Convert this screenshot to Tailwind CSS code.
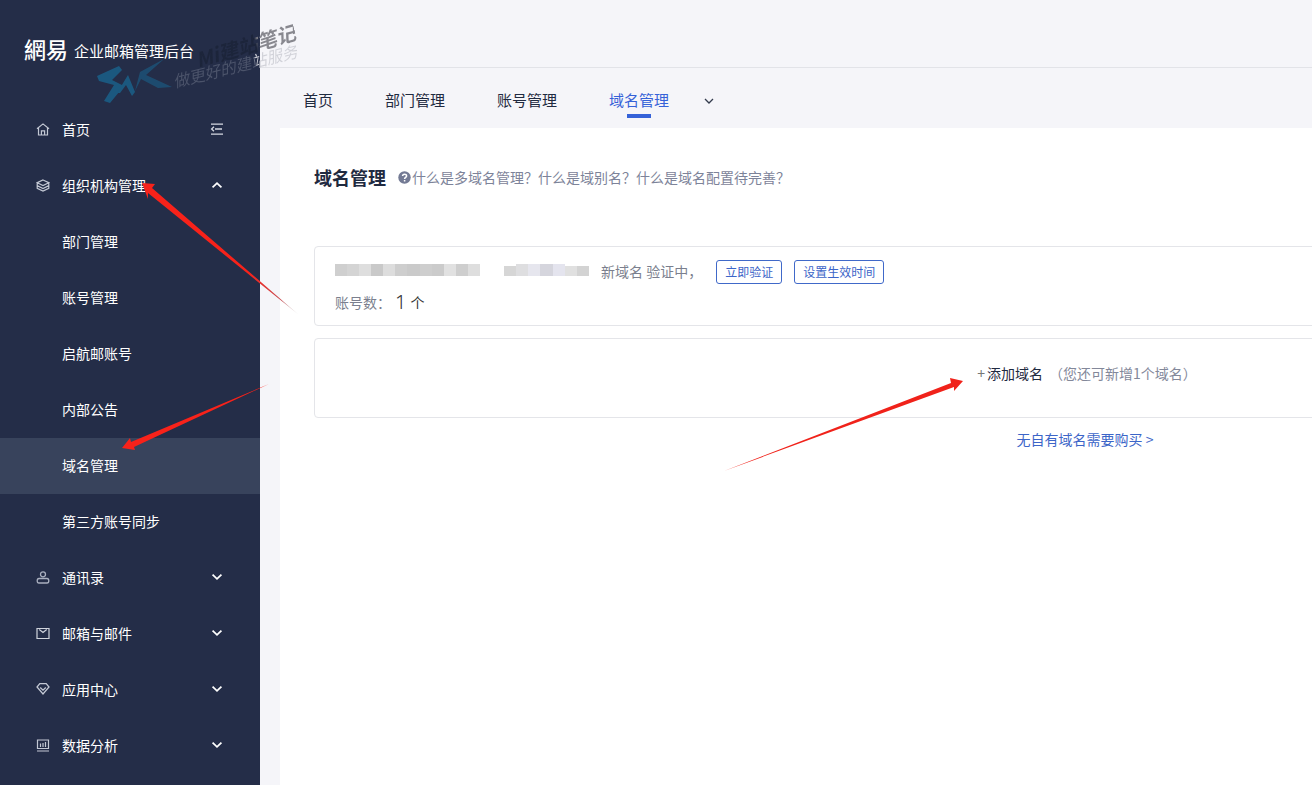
<!DOCTYPE html>
<html lang="zh-CN">
<head>
<meta charset="utf-8">
<meta name="viewport" content="width=device-width, initial-scale=1">
<title>企业邮箱管理后台</title>
<script src="https://cdn.jsdelivr.net/npm/@tailwindcss/browser@4"></script>
</head>
<body class="relative flex min-h-screen overflow-x-hidden bg-[#f5f5f9] font-['Noto_Sans_CJK_SC',sans-serif] text-sm text-[#1f2a40]">

<svg class="hidden" aria-hidden="true">
  <symbol id="down" viewBox="0 0 12 12"><path d="M2.200 4L6 7.600 9.800 4" fill="none" stroke="currentColor" stroke-width="1.5"/></symbol>
</svg>

<aside class="w-[260px] shrink-0 bg-[#242d48] text-white">
  <header class="flex h-[102px] items-start gap-[6px] pt-8 pl-6">
    <span class="font-['Noto_Sans_CJK_TC',sans-serif] text-[22px] leading-8 font-medium">網易</span>
    <span class="text-[15px] leading-[38px]">企业邮箱管理后台</span>
  </header>
  <nav>
    <div class="flex h-14 items-center pr-9 pb-[2px] pl-9">
      <svg class="mr-3 size-[14px] text-[#c3c8d4]" viewBox="0 0 14 14" fill="none" stroke="currentColor" stroke-width="1.2"><path d="M1 6.800L7 1.900l6 4.900M2.500 6v7h9V6M5.400 13V8.800h3.200V13"/></svg>
      <a href="#">首页</a>
      <button class="ml-auto" aria-label="收起菜单"><svg class="size-[14px] text-[#d5d9e2]" viewBox="0 0 14 14" fill="none" stroke="currentColor" stroke-width="1.3"><path d="M1 2.200h12M5 7h7M1 12.200h12M4 4.800L1.600 7 4 9.200"/></svg></button>
    </div>
    <button class="flex h-14 w-full items-center pr-9 pb-[2px] pl-9">
      <svg class="mr-3 size-[14px] text-[#c3c8d4]" viewBox="0 0 14 14" fill="none" stroke="currentColor" stroke-width="1.2"><path d="M7 2l5.800 2.700L7 7.500 1.200 4.700zM1.200 4.700v2.900L7 10.500l5.800-2.900V4.700M1.200 7.600v2.700L7 13.100l5.800-2.800V7.600"/></svg>
      组织机构管理
      <svg class="ml-auto size-[14px] rotate-180"><use href="#down"/></svg>
    </button>
    <a href="#" class="flex h-14 items-center pb-[2px] pl-[62px]">部门管理</a>
    <a href="#" class="flex h-14 items-center pb-[2px] pl-[62px]">账号管理</a>
    <a href="#" class="flex h-14 items-center pb-[2px] pl-[62px]">启航邮账号</a>
    <a href="#" class="flex h-14 items-center pb-[2px] pl-[62px]">内部公告</a>
    <a href="#" aria-current="page" class="flex h-14 items-center bg-[#38435c] pb-[2px] pl-[62px]">域名管理</a>
    <a href="#" class="flex h-14 items-center pb-[2px] pl-[62px]">第三方账号同步</a>
    <button class="flex h-14 w-full items-center pr-9 pb-[2px] pl-9">
      <svg class="mr-3 size-[14px] text-[#a9afbf]" viewBox="0 0 14 14" fill="none" stroke="currentColor" stroke-width="1.3"><circle cx="7" cy="4.300" r="2.500"/><path d="M5.500 8.500h5.500c2.400 0 2.400 4.500 0 4.500H3c-2.400 0-2.400-4.500 0-4.500z"/></svg>
      通讯录
      <svg class="ml-auto size-[14px]"><use href="#down"/></svg>
    </button>
    <button class="flex h-14 w-full items-center pr-9 pb-[2px] pl-9">
      <svg class="mr-3 size-[14px] text-[#d0d4dd]" viewBox="0 0 14 14" fill="none" stroke="currentColor" stroke-width="1.200"><path d="M1 2.500h12v10H1zM3.300 3.500L7 6.500l3.700-3"/></svg>
      邮箱与邮件
      <svg class="ml-auto size-[14px]"><use href="#down"/></svg>
    </button>
    <button class="flex h-14 w-full items-center pr-9 pb-[2px] pl-9">
      <svg class="mr-3 size-[14px] text-[#c3c8d4]" viewBox="0 0 14 14" fill="none" stroke="currentColor" stroke-width="1.3"><path d="M3.800 1.600h6.400l2.800 3.400-6 7L1 5zM4.200 5.500L7 8.200l2.800-2.700"/></svg>
      应用中心
      <svg class="ml-auto size-[14px]"><use href="#down"/></svg>
    </button>
    <button class="flex h-14 w-full items-center pr-9 pb-[2px] pl-9">
      <svg class="mr-3 size-[14px] text-[#c3c8d4]" viewBox="0 0 14 14" fill="none" stroke="currentColor" stroke-width="1.200"><path d="M1.500 2h11v8.500h-11zM1 13h12M4.500 5.500v3.500M7 5v4M9.500 4v5"/></svg>
      数据分析
      <svg class="ml-auto size-[14px]"><use href="#down"/></svg>
    </button>
  </nav>
</aside>

<div class="flex min-w-0 flex-1 flex-col overflow-hidden">
  <div class="h-[68px] border-b border-[#e2e3e8]"></div>
  <nav class="flex h-[60px] items-start gap-[52px] pt-5 pl-[43px] text-[15px] leading-6">
    <a href="#">首页</a>
    <a href="#">部门管理</a>
    <a href="#">账号管理</a>
    <a href="#" aria-current="page" class="flex flex-col items-center gap-[2px] text-[#3562d8]">域名管理<span class="h-1 w-6 bg-[#3562d8]"></span></a>
    <button class="-ml-[18px] flex h-[26px] items-center" aria-label="更多标签"><svg class="size-3" viewBox="0 0 12 12" fill="none" stroke="#333b4d" stroke-width="1.3"><path d="M2 4l4 4 4-4"/></svg></button>
  </nav>

  <main class="ml-5 flex-1 bg-white px-[34px] pt-[35px]">
    <div class="min-w-[1542px]">
      <div class="flex items-center">
        <h1 class="mr-3 text-lg leading-7 font-bold">域名管理</h1>
        <svg class="mr-px size-[13px]" viewBox="0 0 13 13" role="img" aria-label="帮助"><circle cx="6.500" cy="6.500" r="6.200" fill="#737a94"/><path d="M4.600 5C4.600 2.500 8.600 2.500 8.600 5c0 1.400-2 1.500-2 3M6.600 9v1.500" fill="none" stroke="#fff" stroke-width="1.500"/></svg>
        <p class="text-[#7d8399]"><a href="#">什么是多域名管理？</a><a href="#">什么是域别名？</a><a href="#">什么是域名配置待完善？</a></p>
      </div>

      <section class="mt-[55px] h-20 rounded border border-[#e4e5e9] px-5 pt-[13px] text-[#7b7f8e]">
        <div class="flex h-6 items-center">
          <div class="mr-6 mb-1 flex h-3 w-[145px]">
            <i class="flex-1 bg-[#cfcfcf]"></i><i class="flex-1 bg-[#d4d4d4]"></i><i class="flex-1 bg-[#dedede]"></i><i class="flex-1 bg-[#c9c9c9]"></i><i class="flex-1 bg-[#dddddd]"></i><i class="flex-1 bg-[#cecece]"></i><i class="flex-1 bg-[#cacaca]"></i><i class="flex-1 bg-[#cecece]"></i><i class="flex-1 bg-[#cbcbcb]"></i><i class="flex-1 bg-[#e1e1e1]"></i><i class="flex-1 bg-[#cecece]"></i><i class="flex-1 bg-[#dedede]"></i>
          </div>
          <div class="mr-3 mb-1 flex h-3 w-[85px] items-end">
            <i class="h-[10px] flex-1 bg-[#d6d6d6]"></i><i class="h-3 flex-1 bg-[#dedee0]"></i><i class="h-3 flex-1 bg-[#e6e6ee]"></i><i class="h-3 flex-1 bg-[#d5d5dd]"></i><i class="h-3 flex-1 bg-[#e4e4ee]"></i><i class="h-[10px] flex-1 bg-[#e0e0e0]"></i><i class="h-[10px] flex-1 bg-[#d3d3d3]"></i>
          </div>
          <span class="mr-[14px] pb-[2px]">新域名 验证中，</span>
          <button class="mr-3 h-6 rounded-[3px] border border-[#4069c9] px-2 text-xs text-[#3c65c8]">立即验证</button>
          <button class="h-6 rounded-[3px] border border-[#4069c9] px-2 text-xs text-[#3c65c8]">设置生效时间</button>
        </div>
        <p class="mt-[6px] flex h-6 items-center">账号数： <b class="mr-1 ml-1 font-['Noto_Sans'] text-xl leading-6 font-light text-[#333]">1</b><span class="text-[#333]">个</span></p>
      </section>

      <section class="mt-3 flex h-20 items-center justify-center rounded border border-[#e4e5e9] pb-[10px] pl-1">
        <button><span class="mr-[2px] text-[#777]">+</span>添加域名</button>
        <span class="ml-[6px] text-[#83889a]">（您还可新增1个域名）</span>
      </section>
      <p class="mt-[11px] text-center leading-5"><a href="#" class="text-[#3c65c8]">无自有域名需要购买 &gt;</a></p>
    </div>
  </main>
</div>

<!-- Watermark laid over the sidebar and header -->
<div class="pointer-events-none absolute top-0 left-0">
  <svg class="absolute top-[60px] left-[94px] h-[46px] w-[80px] opacity-60" viewBox="0 0 80 46" fill="#1676a5">
    <path d="M25 6L3 16 5 21l15 4-10 16 6 2 14-17-12-6 10-10z"/>
    <path d="M23 33L34 15l7 17-3 4-6-11-6 8z"/>
    <path opacity=".7" d="M41 31L46 12 70-1 52 15l26 12-14 1-17-9z"/>
  </svg>
  <span class="absolute top-[46px] left-[196px] origin-left -rotate-[16deg] bg-linear-to-r from-[#111827]/40 from-60% to-[#88888f] to-63% bg-clip-text text-[20px] leading-7 font-bold whitespace-nowrap text-transparent italic">Mi建站笔记</span>
  <span class="absolute top-[69px] left-[173px] origin-left -rotate-[14deg] bg-linear-to-r from-[#4b536a] from-65% to-[#d0d1d8] to-67% bg-clip-text text-base leading-6 whitespace-nowrap text-transparent italic">做更好的建站服务</span>
</div>

<!-- Annotation arrows -->
<svg class="pointer-events-none absolute top-0 left-0 h-[480px] w-[980px]" viewBox="0 0 980 480" aria-hidden="true">
  <defs>
    <linearGradient id="fade-a" gradientUnits="userSpaceOnUse" x1="143" y1="182" x2="299" y2="315"><stop offset=".68" stop-color="#f8221a"/><stop offset=".88" stop-color="#c94b50"/><stop offset="1" stop-color="#aaa" stop-opacity=".2"/></linearGradient>
  </defs>
  <path fill="url(#fade-a)" d="M142 183L155 184 152 188 299 315 148 193 148 199z"/>
  <path fill="#f8221a" d="M122 448L130 438 131 442 269 384 134 447 135 450z"/>
  <path fill="#f0221a" d="M963 381L950 378 951 383 724 471 954 387 954 391z"/>
</svg>
</body>
</html>
